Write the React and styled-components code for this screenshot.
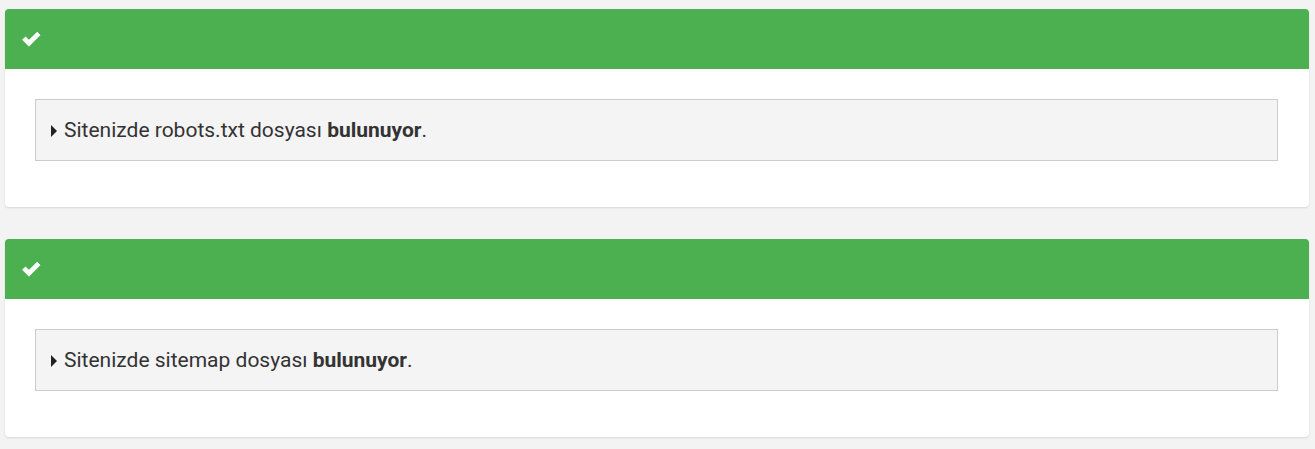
import React from "react";
import styled, { createGlobalStyle } from "styled-components";

const GlobalStyle = createGlobalStyle`
  html, body {
    margin: 0;
    padding: 0;
    background: #f3f3f3;
    font-family: Roboto, "Liberation Sans", Arial, sans-serif;
    color: #333;
  }
`;

const Page = styled.div`
  display: flex;
  flex-direction: column;
  gap: 32px;
  padding: 9px 6px 12px 5px;
`;

const Card = styled.div`
  background: #fff;
  border-radius: 4px;
  box-shadow: 0 1px 2px rgba(0, 0, 0, 0.12);
  overflow: hidden;
`;

const Header = styled.div`
  background: #4caf50;
  height: 60px;
  display: flex;
  align-items: center;
  padding-left: 16px;
`;

const Body = styled.div`
  padding: 30px 31px 46px 30px;
`;

const Result = styled.div`
  background: #f4f4f4;
  border: 1px solid #cbcbcb;
  height: 60px;
  display: flex;
  align-items: center;
  padding-left: 15px;
  font-size: 21px;
  color: #333;
`;

const Caret = styled.span`
  display: inline-block;
  width: 0;
  height: 0;
  border-top: 6px solid transparent;
  border-bottom: 6px solid transparent;
  border-left: 6px solid #222;
  margin-right: 7px;
  margin-top: 1px;
`;

const Strong = styled.b`
  font-weight: 700;
`;

const CheckIcon = () => (
  <svg width="21" height="17" viewBox="0 0 20 16">
    <path
      d="M1.5 8.3 L4.3 5.5 L7.6 8.8 L15.4 1 L18.2 3.8 L7.6 14.4 Z"
      fill="#fff"
      stroke="#fff"
      strokeWidth="0.8"
      strokeLinejoin="round"
    />
  </svg>
);

const checks = [
  { name: "robots.txt" },
  { name: "sitemap" },
];

export default function App() {
  return (
    <>
      <GlobalStyle />
      <Page>
        {checks.map((c) => (
          <Card key={c.name}>
            <Header>
              <CheckIcon />
            </Header>
            <Body>
              <Result>
                <Caret />
                <span>
                  Sitenizde {c.name} dosyası <Strong>bulunuyor</Strong>.
                </span>
              </Result>
            </Body>
          </Card>
        ))}
      </Page>
    </>
  );
}
